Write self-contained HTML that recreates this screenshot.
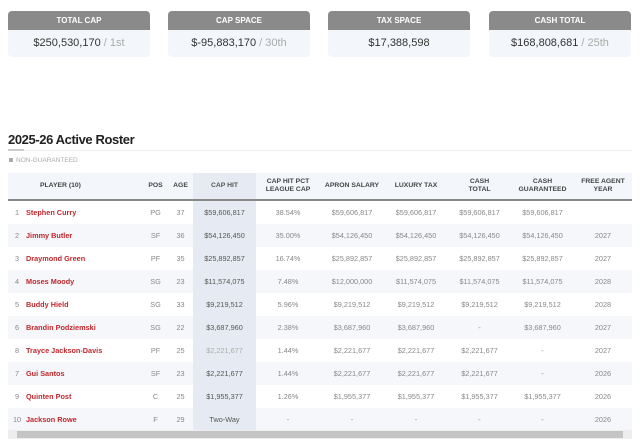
<!DOCTYPE html>
<html><head><style>
body{margin:0;width:640px;height:446px;background:#fff;font-family:"Liberation Sans",sans-serif;position:relative;overflow:hidden}
.card{position:absolute;top:11px;width:142px;height:46px;border-radius:4px;overflow:hidden;background:#f3f6fa}
.card .h{background:#8a8a8a;color:#fff;font-size:8px;font-weight:bold;text-align:center;height:19px;line-height:19px}
.card .v{text-align:center;font-size:11px;color:#333;line-height:27px}
.card .v span{color:#aaa}
h2{position:absolute;left:8px;top:132px;margin:0;font-size:13px;font-weight:bold;color:#222;letter-spacing:-.4px}
.rule{position:absolute;left:8px;top:150px;width:624px;height:1px;background:#eee}
.rule2{position:absolute;left:8px;top:149px;width:16px;height:2px;background:#ccc}
.ng{position:absolute;left:9px;top:157px;font-size:6.5px;color:#aaa}
.ng b{display:inline-block;width:4px;height:4px;background:#aaa;margin-right:3px}
table{position:absolute;left:8px;top:173px;width:624px;border-collapse:collapse;font-size:7.3px;color:#888}
th{height:24px;font-size:6.8px;color:#444;font-weight:bold;background:#f3f6fa;border-bottom:2px solid #888;text-align:center;line-height:8px}
td{height:23px;text-align:center;padding:0}
tr:nth-child(odd) td{background:#f5f7fa}
td.c,th.c{background:#e6ebf3!important;color:#555}
td.p{text-align:left;color:#c0272d;font-weight:bold}
th.p{text-align:left;padding-left:14px}
.sb{position:absolute;left:8px;top:430px;width:624px;height:9px;background:#eee}
.sb div{position:absolute;left:9px;right:9px;top:1px;bottom:1px;background:#c4c4c4}
</style></head><body>
<div class="card" style="left:8px"><div class="h">TOTAL CAP</div><div class="v">$250,530,170 <span>/ 1st</span></div></div>
<div class="card" style="left:168px"><div class="h">CAP SPACE</div><div class="v">$-95,883,170 <span>/ 30th</span></div></div>
<div class="card" style="left:328px"><div class="h">TAX SPACE</div><div class="v">$17,388,598</div></div>
<div class="card" style="left:489px"><div class="h">CASH TOTAL</div><div class="v">$168,808,681 <span>/ 25th</span></div></div>
<h2>2025-26 Active Roster</h2>
<div class="rule"></div><div class="rule2"></div>
<div class="ng"><b></b>NON-GUARANTEED</div>
<table>
<colgroup><col style="width:18px"><col style="width:117px"><col style="width:25px"><col style="width:25px"><col style="width:63px"><col style="width:64px"><col style="width:64px"><col style="width:64px"><col style="width:63px"><col style="width:63px"><col style="width:58px"></colgroup>
<tr><th></th><th class="p">PLAYER (10)</th><th>POS</th><th>AGE</th><th class="c">CAP HIT</th><th>CAP HIT PCT<br>LEAGUE CAP</th><th>APRON SALARY</th><th>LUXURY TAX</th><th>CASH<br>TOTAL</th><th>CASH<br>GUARANTEED</th><th>FREE AGENT<br>YEAR</th></tr>
<tr><td>1</td><td class="p">Stephen Curry</td><td>PG</td><td>37</td><td class="c">$59,606,817</td><td>38.54%</td><td>$59,606,817</td><td>$59,606,817</td><td>$59,606,817</td><td>$59,606,817</td><td></td></tr>
<tr><td>2</td><td class="p">Jimmy Butler</td><td>SF</td><td>36</td><td class="c">$54,126,450</td><td>35.00%</td><td>$54,126,450</td><td>$54,126,450</td><td>$54,126,450</td><td>$54,126,450</td><td>2027</td></tr>
<tr><td>3</td><td class="p">Draymond Green</td><td>PF</td><td>35</td><td class="c">$25,892,857</td><td>16.74%</td><td>$25,892,857</td><td>$25,892,857</td><td>$25,892,857</td><td>$25,892,857</td><td>2027</td></tr>
<tr><td>4</td><td class="p">Moses Moody</td><td>SG</td><td>23</td><td class="c">$11,574,075</td><td>7.48%</td><td>$12,000,000</td><td>$11,574,075</td><td>$11,574,075</td><td>$11,574,075</td><td>2028</td></tr>
<tr><td>5</td><td class="p">Buddy Hield</td><td>SG</td><td>33</td><td class="c">$9,219,512</td><td>5.96%</td><td>$9,219,512</td><td>$9,219,512</td><td>$9,219,512</td><td>$9,219,512</td><td>2028</td></tr>
<tr><td>6</td><td class="p">Brandin Podziemski</td><td>SG</td><td>22</td><td class="c">$3,687,960</td><td>2.38%</td><td>$3,687,960</td><td>$3,687,960</td><td>-</td><td>$3,687,960</td><td>2027</td></tr>
<tr><td>8</td><td class="p">Trayce Jackson-Davis</td><td>PF</td><td>25</td><td class="c" style="color:#aaa">$2,221,677</td><td>1.44%</td><td>$2,221,677</td><td>$2,221,677</td><td>$2,221,677</td><td>-</td><td>2027</td></tr>
<tr><td>7</td><td class="p">Gui Santos</td><td>SF</td><td>23</td><td class="c">$2,221,677</td><td>1.44%</td><td>$2,221,677</td><td>$2,221,677</td><td>$2,221,677</td><td>-</td><td>2026</td></tr>
<tr><td>9</td><td class="p">Quinten Post</td><td>C</td><td>25</td><td class="c">$1,955,377</td><td>1.26%</td><td>$1,955,377</td><td>$1,955,377</td><td>$1,955,377</td><td>$1,955,377</td><td>2026</td></tr>
<tr><td>10</td><td class="p">Jackson Rowe</td><td>F</td><td>29</td><td class="c">Two-Way</td><td>-</td><td>-</td><td>-</td><td>-</td><td>-</td><td>2026</td></tr>
</table>
<div class="sb"><div></div></div>
</body></html>
